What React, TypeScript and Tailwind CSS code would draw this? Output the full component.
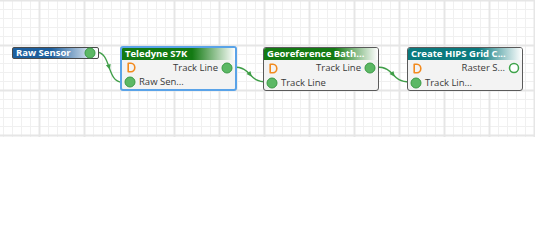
import React from "react";

const W = 535;
const GH = 137;

function Grid() {
  const lines: React.ReactNode[] = [];
  for (let x = 3; x < W; x += 9) {
    const major = (x - 39) % 45 === 0;
    if (!major) lines.push(<line key={"vx" + x} x1={x + 0.5} y1={0} x2={x + 0.5} y2={GH} stroke="#f0f0f0" strokeWidth={1} />);
  }
  for (let y = 0; y < GH; y += 9) {
    const major = y % 45 === 0;
    if (!major) lines.push(<line key={"hy" + y} x1={0} y1={y + 0.5} x2={W} y2={y + 0.5} stroke="#f0f0f0" strokeWidth={1} />);
  }
  for (let x = 39 - 45; x < W; x += 45) {
    lines.push(<line key={"VX" + x} x1={x + 0.5} y1={0} x2={x + 0.5} y2={GH} stroke="#e6e6e6" strokeWidth={2} />);
  }
  for (let y = 0; y <= 135; y += 45) {
    lines.push(<line key={"HY" + y} x1={0} y1={y + 0.5} x2={W} y2={y + 0.5} stroke="#e6e6e6" strokeWidth={2} />);
  }
  return (
    <svg className="absolute left-0 top-0" width={W} height={GH}>
      {lines}
    </svg>
  );
}

function Port({ hollow = false }: { hollow?: boolean }) {
  return (
    <svg width="12" height="12" viewBox="0 0 12 12" className="shrink-0">
      {hollow ? (
        <circle cx="6" cy="6" r="4.5" fill="#ffffff" stroke="#3fa34a" strokeWidth="1.5" />
      ) : (
        <circle cx="6" cy="6" r="5" fill="#5cb865" stroke="#3b9a45" strokeWidth="1" />
      )}
    </svg>
  );
}

function DIcon() {
  return (
    <svg width="9" height="11" viewBox="0 0 9 11" className="shrink-0">
      <path d="M1.2 1.2 H4 A3.8 4.3 0 0 1 4 9.8 H1.2 Z" fill="none" stroke="#f28a1e" strokeWidth="1.6" strokeLinejoin="round" />
    </svg>
  );
}

function Edge({ x1, y1, x2, y2 }: { x1: number; y1: number; x2: number; y2: number }) {
  const dx = (x2 - x1) * 0.6;
  const d = `M${x1} ${y1} C${x1 + dx} ${y1} ${x2 - dx} ${y2} ${x2} ${y2}`;
  const mx = (x1 + x2) / 2;
  const my = (y1 + y2) / 2;
  const ang = (Math.atan2(y2 - y1, (x2 - x1) * 0.35) * 180) / Math.PI;
  return (
    <g>
      <path d={d} fill="none" stroke="#3f9e48" strokeWidth="1.3" />
      <polygon points="-2.5,-2.5 3,0 -2.5,2.5" fill="#3f9e48" transform={`translate(${mx} ${my}) rotate(${ang})`} />
    </g>
  );
}

type NodeProps = {
  left: string;
  title: string;
  header: string;
  selected?: boolean;
  out: string;
  inp: string;
  hollow?: boolean;
};

function Node({ left, title, header, selected, out, inp, hollow }: NodeProps) {
  return (
    <div
      className={`absolute ${left} flex flex-col overflow-hidden rounded-[3px] bg-[#f3f3f3] ${
        selected ? "top-[46px] h-[45px] w-[117px] border-2 border-[#5aa3e8]" : "top-[47px] h-[44px] w-[116px] border border-[#5a5a5a]"
      }`}
    >
      <div className={`flex h-[12px] items-center px-[3px] text-[9.5px] font-bold leading-none text-white ${header}`}>{title}</div>
      <div className="flex h-[16px] items-center pl-[5px] pr-[2px]">
        <DIcon />
        <span className="ml-auto mr-[3px] text-[9.5px] leading-none text-[#3a3a3a]">{out}</span>
        <Port hollow={hollow} />
      </div>
      <div className="flex h-[14px] items-center pl-[2px]">
        <Port />
        <span className="ml-[3px] text-[9.5px] leading-none text-[#3a3a3a]">{inp}</span>
      </div>
    </div>
  );
}

export default function App() {
  return (
    <div className="relative h-[252px] w-[535px] overflow-hidden bg-white" style={{ fontFamily: '"Open Sans", "Noto Sans", sans-serif' }}>
      <Grid />
      <svg className="absolute left-0 top-0" width={W} height={GH}>
        <Edge x1={96} y1={52} x2={122} y2={82} />
        <Edge x1={233} y1={67} x2={267} y2={82} />
        <Edge x1={376} y1={67} x2={410} y2={82} />
      </svg>
      <div className="absolute left-[12px] top-[47px] flex h-[12px] w-[87px] items-center rounded-[2px] border border-[#4a4a4a] bg-[linear-gradient(to_right,#1d5f9e_0%,#1d5f9e_45%,#ffffff_100%)] pl-[3px] pr-[2px]">
        <span className="text-[9.5px] font-bold leading-none text-white">Raw Sensor</span>
        <span className="ml-auto"><Port /></span>
      </div>
      <Node
        left="left-[120px]"
        title="Teledyne S7K"
        header="bg-[linear-gradient(to_right,#137a13_0%,#137a13_62%,#ffffff_100%)]"
        selected
        out="Track Line"
        inp="Raw Sen..."
      />
      <Node
        left="left-[263px]"
        title="Georeference Bath..."
        header="bg-[linear-gradient(to_right,#137a13_0%,#137a13_62%,#ffffff_100%)]"
        out="Track Line"
        inp="Track Line"
      />
      <Node
        left="left-[407px]"
        title="Create HIPS Grid C..."
        header="bg-[linear-gradient(to_right,#0b7a7e_0%,#0b7a7e_62%,#ffffff_100%)]"
        out="Raster S..."
        inp="Track Lin..."
        hollow
      />
    </div>
  );
}
